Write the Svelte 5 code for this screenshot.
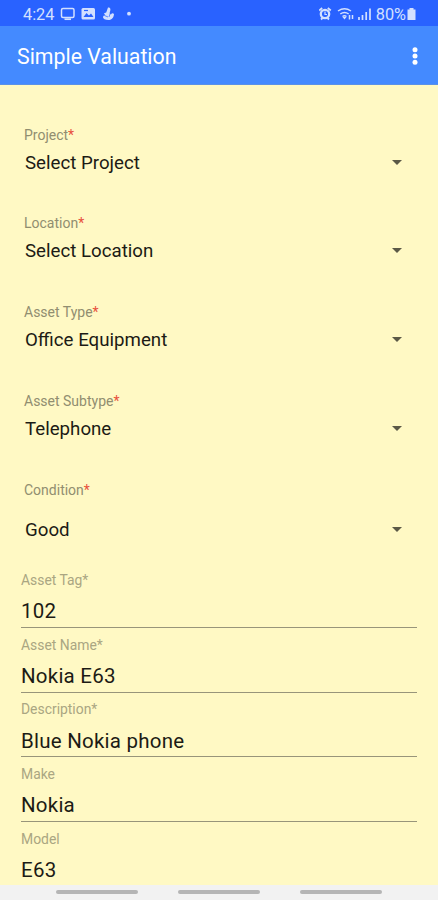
<script>
  let selects = [
    { label: 'Project', value: 'Select Project' },
    { label: 'Location', value: 'Select Location' },
    { label: 'Asset Type', value: 'Office Equipment' },
    { label: 'Asset Subtype', value: 'Telephone' },
    { label: 'Condition', value: 'Good', spaced: true }
  ];

  let inputs = [
    { label: 'Asset Tag*', value: '102' },
    { label: 'Asset Name*', value: 'Nokia E63' },
    { label: 'Description*', value: 'Blue Nokia phone' },
    { label: 'Make', value: 'Nokia' },
    { label: 'Model', value: 'E63' }
  ];
</script>

<div class="screen">
  <div class="status-bar">
    <span class="time">4:24</span>
    <svg class="left-icons" width="76" height="16" viewBox="0 0 76 16">
      <rect x="1.500" y="2.500" width="12.500" height="9" rx="1.500" fill="none" stroke="#d3e0ff" stroke-width="1.500" />
      <path d="M4.500 13.200h6.500" stroke="#d3e0ff" stroke-width="1.700" />
      <rect x="21.500" y="2" width="13.500" height="11.500" rx="1.500" fill="#d3e0ff" />
      <path d="M23.500 11l3-4 2.500 2.500 2-2 2.500 3.500z" fill="#2962ff" />
      <path d="M24 4.500h4" stroke="#2962ff" stroke-width="1.200" />
      <path d="M48 1.500c2-.5 2.800 1 2.300 3l-.8 3 1.500 1c.8-1.500 2-1.500 3-.5-.3 3.500-2 6-5.500 6-3.200 0-5.500-1.200-5.500-2.800 0-1.200 1-1.700 2.200-1.900l-1.200-2 2.200-.8z" fill="#d3e0ff" />
      <path d="M44.500 9.500l3.500 1.500M50 8l-1 3" stroke="#2962ff" stroke-width=".7" />
      <circle cx="69" cy="7.700" r="1.900" fill="#d3e0ff" />
    </svg>
    <span class="grow"></span>
    <svg class="right-icons" width="54" height="16" viewBox="0 0 54 16" fill="none" stroke="#d3e0ff">
      <circle cx="6" cy="8" r="4.200" stroke-width="2.300" />
      <path d="M6 5.500v3h2" stroke-width="1.200" />
      <path d="M.2 4.500l3-2.500M11.800 4.500l-3-2.500M2 13.500l1.500-1.500M10 13.500l-1.500-1.500" stroke-width="1.800" />
      <path d="M19 5q6.500-4.500 13 0M21.300 8q4.200-3.200 8.400 0M23.500 10.500q2-1.600 4 0" stroke-width="1.500" />
      <path d="M25.500 13.500l2-2.500h-4z" fill="#d3e0ff" stroke="none" />
      <path d="M30.500 9v4.500M33.500 9v4" stroke-width="1.500" />
      <path d="M40 11v3M43.500 9v5M47.200 6v8M51 2.500v11.500" stroke-width="1.700" />
    </svg>
    <span class="battery-text">80%</span>
    <svg width="9" height="14" viewBox="0 0 9 14" fill="#d3e0ff">
      <path d="M2.500 1h4v1.500H8.500V13H.5V2.500h2z" />
    </svg>
  </div>

  <header class="app-bar">
    <h1>Simple Valuation</h1>
    <svg width="8" height="20" viewBox="0 0 8 20" fill="#fff">
      <circle cx="4" cy="3.700" r="2.500" />
      <circle cx="4" cy="10" r="2.500" />
      <circle cx="4" cy="16.300" r="2.500" />
    </svg>
  </header>

  <main>
    {#each selects as field}
      <div class="select-field" class:spaced={field.spaced}>
        <div class="select-label">{field.label}<span class="required">*</span></div>
        <div class="select-value">
          <span>{field.value}</span>
          <svg width="10" height="6" viewBox="0 0 10 6"><path d="M0 0h10L5 5z" fill="#5b5946" /></svg>
        </div>
      </div>
    {/each}

    {#each inputs as field}
      <div class="input-field">
        <div class="input-label">{field.label}</div>
        <div class="input-value">{field.value}</div>
      </div>
    {/each}
  </main>

  <nav class="nav-bar">
    <span></span>
    <span></span>
    <span></span>
  </nav>
</div>

<style>
  :global(body) {
    margin: 0;
    overflow: hidden;
  }
  .screen {
    display: flex;
    flex-direction: column;
    height: 900px;
    font-family: Roboto, sans-serif;
    background: #fff9c4;
    overflow: hidden;
  }
  .status-bar {
    display: flex;
    align-items: center;
    flex: none;
    box-sizing: border-box;
    height: 26px;
    padding: 2px 22px 0 23px;
    background: #2962ff;
    color: #d3e0ff;
    font-size: 16.3px;
  }
  .left-icons {
    margin-left: 6px;
  }
  .grow {
    flex: 1;
  }
  .right-icons {
    margin-right: 3px;
  }
  .battery-text {
    margin-right: 1px;
  }
  .app-bar {
    display: flex;
    align-items: center;
    justify-content: space-between;
    flex: none;
    box-sizing: border-box;
    height: 59px;
    padding: 2px 19px 0 17px;
    background: #448aff;
    border-bottom: 1px solid #5b91e6;
    color: #fff;
  }
  h1 {
    margin: 0;
    font-size: 21.3px;
    font-weight: 400;
  }
  main {
    flex: 1;
    min-height: 0;
    padding: 39.7px 21px 0;
    overflow: hidden;
  }
  .select-field {
    height: 88.8px;
    padding: 0 15px 0 3px;
  }
  .select-label {
    height: 20px;
    line-height: 20px;
    font-size: 14px;
    color: #918e70;
  }
  .required {
    color: #e8503c;
  }
  .select-value {
    display: flex;
    align-items: center;
    justify-content: space-between;
    height: 24px;
    margin-top: 6px;
    padding-left: 1px;
    font-size: 18.7px;
    color: #1c1b15;
  }
  .spaced {
    height: 83.3px;
  }
  .spaced .select-value {
    margin-top: 18px;
  }
  .input-field {
    box-sizing: border-box;
    height: 64.7px;
    padding-top: 6.7px;
    border-bottom: 1px solid #98957a;
  }
  .input-label {
    height: 20px;
    line-height: 20px;
    font-size: 13.9px;
    color: #aaa682;
  }
  .input-value {
    height: 24px;
    margin-top: 9.5px;
    line-height: 24px;
    font-size: 20.5px;
    letter-spacing: 0.23px;
    color: #1c1b15;
  }
  .nav-bar {
    display: flex;
    justify-content: center;
    gap: 40px;
    flex: none;
    box-sizing: border-box;
    height: 15px;
    padding-top: 5px;
    background: #f2f2f2;
  }
  .nav-bar span {
    width: 82px;
    height: 4px;
    border-radius: 2px;
    background: #b5b5b5;
  }
</style>
